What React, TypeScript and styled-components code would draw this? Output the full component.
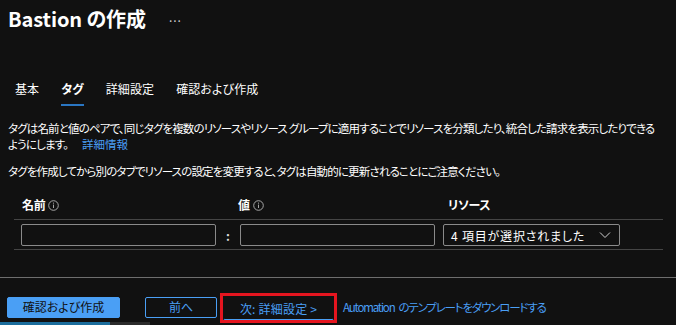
import React from 'react'
import styled, { createGlobalStyle } from 'styled-components'

const GlobalStyle = createGlobalStyle`
  html, body {
    margin: 0;
    padding: 0;
    background: #111111;
  }
  body {
    font-family: "Noto Sans CJK JP", "Noto Sans", sans-serif;
    font-feature-settings: "palt";
    color: #ffffff;
  }
`

const blue = '#4a9ff5'

const Page = styled.div`
  width: 676px;
  height: 325px;
  display: flex;
  flex-direction: column;
  overflow: hidden;
  background: #111111;
`

const Header = styled.div`
  display: flex;
  align-items: center;
  padding: 4px 0 0 8px;
  height: 28px;
`

const Title = styled.h1`
  margin: 0;
  font-size: 20px;
  font-weight: 700;
  letter-spacing: -0.1px;
  color: #ffffff;
`

const More = styled.span`
  margin-left: 23px;
  margin-bottom: 3px;
  font-size: 12px;
  color: #cfcfcf;
  letter-spacing: 1px;
`

const Tabs = styled.div`
  display: flex;
  gap: 22px;
  margin-top: 48px;
  padding-left: 15px;
`

const Tab = styled.div<{ active?: boolean }>`
  font-size: 12px;
  line-height: 18px;
  padding-bottom: 6px;
  color: #ffffff;
  letter-spacing: 0.1px;
  font-weight: ${p => (p.active ? 600 : 400)};
  border-bottom: 2px solid ${p => (p.active ? '#2a76c2' : 'transparent')};
`

const Body = styled.div`
  padding: 14px 14px 0 8px;
`

const Para = styled.p<{ gap?: number }>`
  margin: 0 0 ${p => p.gap ?? 0}px 0;
  font-size: 11.5px;
  line-height: 16px;
  letter-spacing: -0.85px;
  color: #ffffff;
`

const InlineLink = styled.a`
  color: ${blue};
  text-decoration: none;
  margin-left: 14px;
  letter-spacing: 0;
`

const Table = styled.div`
  margin: 17px 13px 0 14px;
`

const HeadRow = styled.div`
  display: grid;
  grid-template-columns: 216px 210px 1fr;
  padding: 0 0 5px 8px;
  border-bottom: 1px solid #454545;
`

const HeadCell = styled.div`
  display: flex;
  align-items: center;
  gap: 3px;
  font-size: 12px;
  font-weight: 700;
  line-height: 18px;
  letter-spacing: -0.3px;
`

const InfoIcon = () => (
  <svg width="11" height="11" viewBox="0 0 11 11">
    <circle cx="5.5" cy="5.5" r="4.8" fill="none" stroke="#b5b5b5" strokeWidth="0.9" />
    <line x1="5.5" y1="4.6" x2="5.5" y2="8" stroke="#b5b5b5" strokeWidth="0.9" />
    <circle cx="5.5" cy="3.1" r="0.6" fill="#b5b5b5" />
  </svg>
)

const InputRow = styled.div`
  display: flex;
  align-items: center;
  padding: 4px 0 3px 7px;
  border-bottom: 1px solid #454545;
`

const TextBox = styled.div`
  width: 193px;
  height: 20px;
  border: 1px solid #8a8a8a;
  border-radius: 2px;
  box-sizing: content-box;
`

const Colon = styled.span`
  width: 24px;
  text-align: center;
  font-size: 12px;
  font-weight: 700;
  color: #dcdcdc;
`

const Select = styled.div`
  margin-left: 8px;
  width: 177px;
  height: 22px;
  border: 1px solid #8a8a8a;
  border-radius: 2px;
  display: flex;
  align-items: center;
  justify-content: space-between;
  padding: 0 8px 0 7px;
  box-sizing: border-box;
  font-size: 12px;
  letter-spacing: 0.8px;
  color: #ffffff;
`

const Chevron = () => (
  <svg width="12" height="8" viewBox="0 0 12 8">
    <polyline points="1,1.5 6,6.5 11,1.5" fill="none" stroke="#d0d0d0" strokeWidth="1" />
  </svg>
)

const Divider = styled.div`
  margin-top: 27px;
  height: 1px;
  background: #6e6e6e;
`

const Footer = styled.div`
  display: flex;
  align-items: center;
  padding: 17px 0 0 7px;
`

const Button = styled.button<{ variant: 'primary' | 'outline' | 'next' }>`
  height: 21px;
  box-sizing: border-box;
  font-family: inherit;
  font-feature-settings: "palt";
  font-size: 12px;
  line-height: 1;
  border-radius: 2px;
  padding: 0;
  cursor: pointer;
  background: ${p => (p.variant === 'primary' ? blue : 'transparent')};
  color: ${p => (p.variant === 'primary' ? '#111111' : blue)};
  border: 1px solid ${p => (p.variant === 'next' ? 'transparent' : blue)};
  border-bottom-color: ${blue};
`

const PrimaryButton = styled(Button)`
  width: 113px;
`

const BackButton = styled(Button)`
  width: 72px;
  margin-left: 25px;
`

const Highlight = styled.div`
  position: relative;
  margin-left: 6px;
  &::after {
    content: '';
    position: absolute;
    left: -3px;
    right: -3px;
    top: -2px;
    bottom: -3px;
    border: 3px solid #e5151f;
    pointer-events: none;
  }
`

const NextButton = styled(Button)`
  width: 111px;
  letter-spacing: 0.2px;
`

const FooterLink = styled.a`
  margin-left: 9px;
  font-size: 11.5px;
  color: ${blue};
  text-decoration: none;
  letter-spacing: -1.2px;
`

const LinkSpace = styled.span`
  display: inline-block;
  width: 4px;
`

const TaskStrip = styled.div`
  margin-top: auto;
  height: 3px;
  display: flex;
`

const StripPiece = styled.div<{ w: number; color: string }>`
  width: ${p => p.w}px;
  background: ${p => p.color};
`

export default function App() {
  return (
    <>
      <GlobalStyle />
      <Page>
        <Header>
          <Title>Bastion の作成</Title>
          <More>...</More>
        </Header>
        <Tabs>
          <Tab>基本</Tab>
          <Tab active>タグ</Tab>
          <Tab>詳細設定</Tab>
          <Tab>確認および作成</Tab>
        </Tabs>
        <Body>
          <Para gap={11}>
            タグは名前と値のペアで、同じタグを複数のリソースやリソース グループに適用することでリソースを分類したり、統合した請求を表示したりできるようにします。
            <InlineLink href="#">詳細情報</InlineLink>
          </Para>
          <Para>タグを作成してから別のタブでリソースの設定を変更すると、タグは自動的に更新されることにご注意ください。</Para>
        </Body>
        <Table>
          <HeadRow>
            <HeadCell>
              名前 <InfoIcon />
            </HeadCell>
            <HeadCell>
              値 <InfoIcon />
            </HeadCell>
            <HeadCell>リソース</HeadCell>
          </HeadRow>
          <InputRow>
            <TextBox />
            <Colon>:</Colon>
            <TextBox />
            <Select>
              <span>4 項目が選択されました</span>
              <Chevron />
            </Select>
          </InputRow>
        </Table>
        <Divider />
        <Footer>
          <PrimaryButton variant="primary">確認および作成</PrimaryButton>
          <BackButton variant="outline">前へ</BackButton>
          <Highlight>
            <NextButton variant="next">次: 詳細設定 &gt;</NextButton>
          </Highlight>
          <FooterLink href="#">
            Automation<LinkSpace />のテンプレートをダウンロードする
          </FooterLink>
        </Footer>
        <TaskStrip>
          <StripPiece w={110} color="#1b6d9c" />
          <StripPiece w={40} color="#2b2b2b" />
        </TaskStrip>
      </Page>
    </>
  )
}
